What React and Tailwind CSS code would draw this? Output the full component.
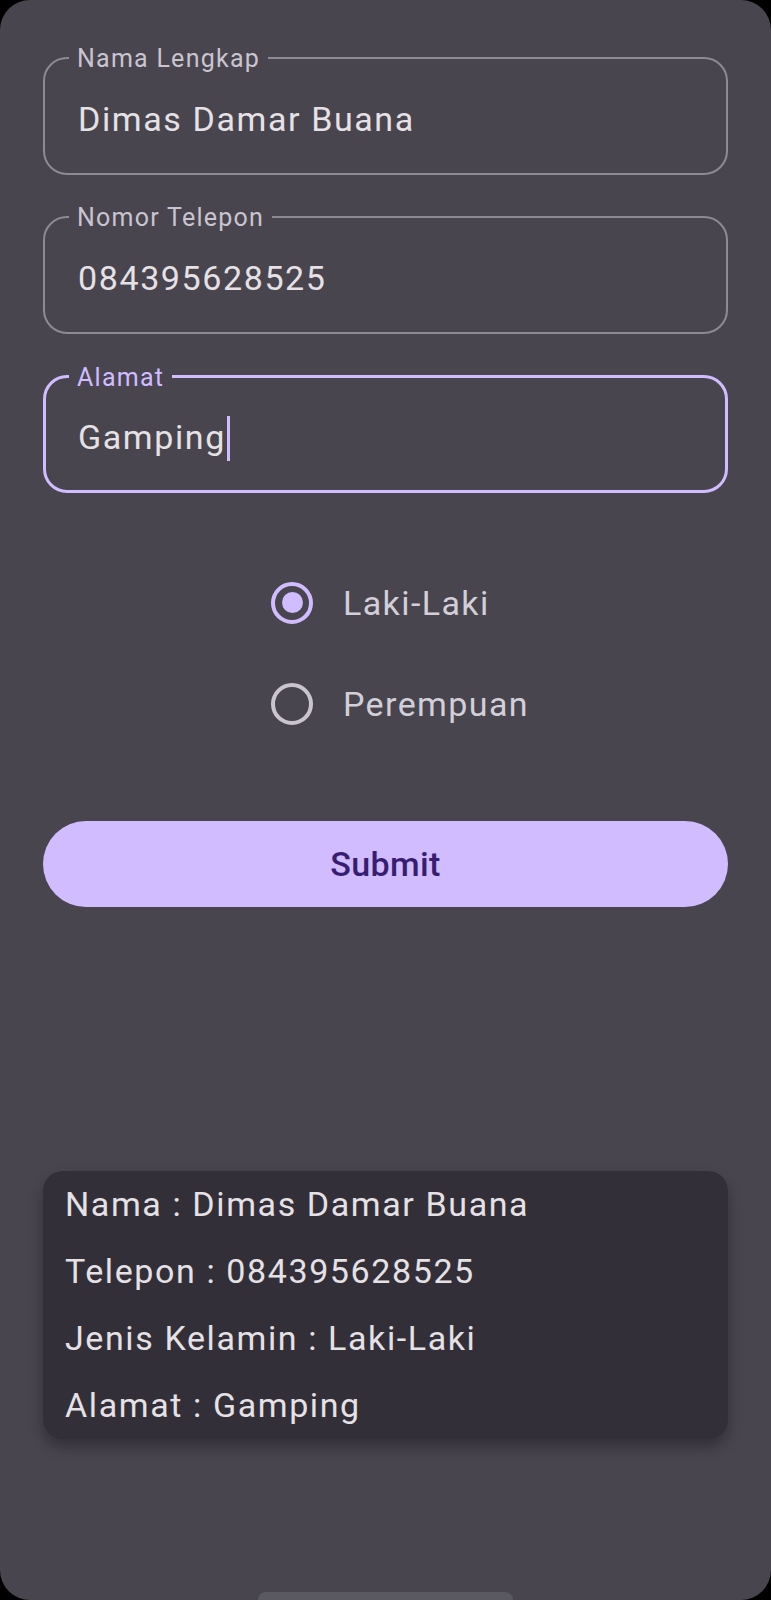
import { useState } from 'react';

const font = { fontFamily: 'Roboto, "Noto Sans", sans-serif' };

function OutlinedField({ label, value, focused }) {
  return (
    <div
      className={`relative h-[118px] rounded-[24px] ${
        focused ? 'border-[3px] border-[#D0BCFF]' : 'border-[2px] border-[#8E8A95]'
      }`}
    >
      <span
        className={`absolute top-0 -translate-y-1/2 px-[8px] bg-[#48454F] text-[25px] leading-none tracking-[1.25px] ${
          focused ? 'left-[23px] -mt-[1px] text-[#D0BCFF]' : 'left-[24px] -mt-[1px] text-[#CAC4D0]'
        }`}
      >
        {label}
      </span>
      <div
        className={`h-full flex items-center pt-[5px] text-[34px] leading-none tracking-[1.6px] text-[#E6E1E5] ${
          focused ? 'pl-[32px]' : 'pl-[33px]'
        }`}
      >
        {value}
        {focused && <span className="inline-block w-[3px] h-[45px] bg-[#D0BCFF] ml-[1px] mt-[4px]" />}
      </div>
    </div>
  );
}

function Radio({ label, checked, onSelect }) {
  return (
    <button type="button" onClick={onSelect} className="flex items-center h-[101px] text-left">
      <span className="w-[101px] h-[101px] flex items-center justify-center flex-shrink-0">
        <span
          className={`w-[42px] h-[42px] rounded-full border-[4px] flex items-center justify-center ${
            checked ? 'border-[#D0BCFF]' : 'border-[#CAC4D0]'
          }`}
        >
          {checked && <span className="w-[21px] h-[21px] rounded-full bg-[#D0BCFF]" />}
        </span>
      </span>
      <span className="text-[34px] leading-none tracking-[1.4px] text-[#D3CFD8]">{label}</span>
    </button>
  );
}

export default function App() {
  const [gender, setGender] = useState('Laki-Laki');
  const nama = 'Dimas Damar Buana';
  const telepon = '084395628525';
  const alamat = 'Gamping';

  const summary = [
    `Nama : ${nama}`,
    `Telepon : ${telepon}`,
    `Jenis Kelamin : ${gender}`,
    `Alamat : ${alamat}`,
  ];

  return (
    <div className="bg-black h-[1600px] w-full overflow-hidden" style={font}>
      <div className="relative h-full bg-[#48454F] rounded-[30px] flex flex-col px-[43px] pt-[57px]">
        <div className="flex flex-col gap-[41px]">
          <OutlinedField label="Nama Lengkap" value={nama} />
          <OutlinedField label="Nomor Telepon" value={telepon} />
          <OutlinedField label="Alamat" value={alamat} focused />
        </div>

        <div className="flex justify-center mt-[59px]">
          <div className="flex flex-col">
            {['Laki-Laki', 'Perempuan'].map((g) => (
              <Radio key={g} label={g} checked={gender === g} onSelect={() => setGender(g)} />
            ))}
          </div>
        </div>

        <button
          type="button"
          className="mt-[67px] h-[86px] w-full rounded-full bg-[#D0BCFF] text-[#381E72] text-[34px] font-medium tracking-[0.4px] leading-none flex items-center justify-center"
        >
          Submit
        </button>

        <div className="mt-[264px] bg-[#322F39] rounded-[20px] pl-[22px] pr-4 shadow-[0_8px_14px_rgba(0,0,0,0.3)]">
          {summary.map((line) => (
            <p key={line} className="text-[34px] leading-[67px] tracking-[1.6px] text-[#E6E1E5]">
              {line}
            </p>
          ))}
        </div>

        <div className="absolute left-[258px] bottom-0 w-[255px] h-[8px] rounded-t-full bg-[#5A5860]" />
      </div>
    </div>
  );
}
